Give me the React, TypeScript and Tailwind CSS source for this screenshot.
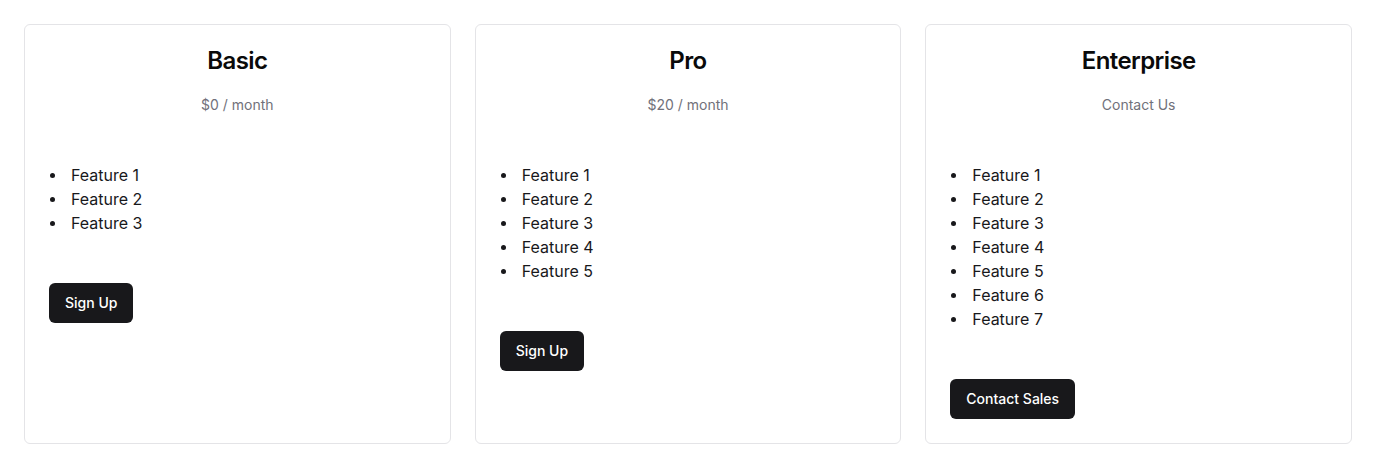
const plans = [
  { name: 'Basic', price: '$0 / month', features: 3, cta: 'Sign Up' },
  { name: 'Pro', price: '$20 / month', features: 5, cta: 'Sign Up' },
  { name: 'Enterprise', price: 'Contact Us', features: 7, cta: 'Contact Sales' },
]

function PlanCard({ name, price, features, cta }: { name: string; price: string; features: number; cta: string }) {
  return (
    <div className="bg-white border border-[#e4e4e7] rounded-md h-[420px] px-6 pt-[20px]">
      <h2 className="text-center text-2xl font-semibold tracking-tight text-[#0a0a0a] leading-8">{name}</h2>
      <p className="text-center text-sm text-[#71717a] leading-5 mt-[18px]">{price}</p>
      <ul className="mt-[48px] text-base leading-6 text-[#18181b]">
        {Array.from({ length: features }, (_, i) => (
          <li key={i} className="flex items-center">
            <span className="w-[22px] flex">
              <span className="ml-px w-[5px] h-[5px] rounded-full bg-[#18181b]" />
            </span>
            Feature {i + 1}
          </li>
        ))}
      </ul>
      <button className="mt-12 h-10 px-4 rounded-md bg-[#18181b] text-white text-sm font-medium">
        {cta}
      </button>
    </div>
  )
}

export default function App() {
  return (
    <div className="min-h-[468px] bg-white p-6 font-['Inter',sans-serif]">
      <div className="grid grid-cols-3 gap-6">
        {plans.map((p) => (
          <PlanCard key={p.name} {...p} />
        ))}
      </div>
    </div>
  )
}
